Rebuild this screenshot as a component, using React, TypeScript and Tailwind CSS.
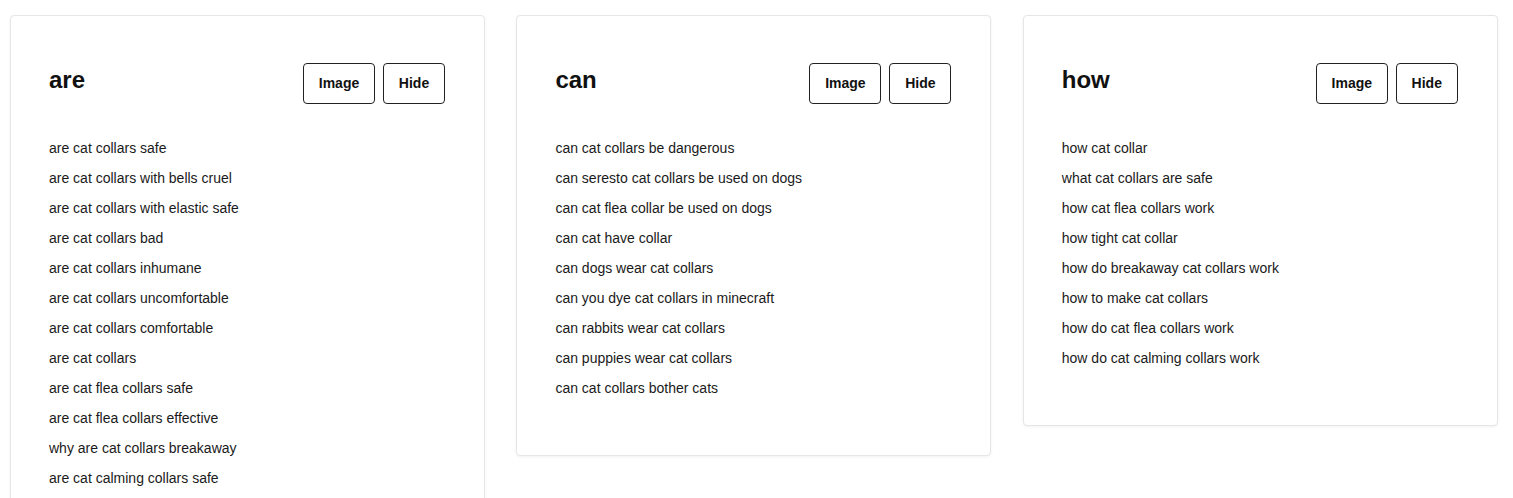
const groups: { title: string; items: string[] }[] = [
  {
    title: "are",
    items: [
      "are cat collars safe",
      "are cat collars with bells cruel",
      "are cat collars with elastic safe",
      "are cat collars bad",
      "are cat collars inhumane",
      "are cat collars uncomfortable",
      "are cat collars comfortable",
      "are cat collars",
      "are cat flea collars safe",
      "are cat flea collars effective",
      "why are cat collars breakaway",
      "are cat calming collars safe",
    ],
  },
  {
    title: "can",
    items: [
      "can cat collars be dangerous",
      "can seresto cat collars be used on dogs",
      "can cat flea collar be used on dogs",
      "can cat have collar",
      "can dogs wear cat collars",
      "can you dye cat collars in minecraft",
      "can rabbits wear cat collars",
      "can puppies wear cat collars",
      "can cat collars bother cats",
    ],
  },
  {
    title: "how",
    items: [
      "how cat collar",
      "what cat collars are safe",
      "how cat flea collars work",
      "how tight cat collar",
      "how do breakaway cat collars work",
      "how to make cat collars",
      "how do cat flea collars work",
      "how do cat calming collars work",
    ],
  },
]

function Card({ title, items }: { title: string; items: string[] }) {
  return (
    <div className="bg-white border border-[#e6e6e6] rounded-[4px] shadow-[0_1px_3px_rgba(0,0,0,0.06)] pt-[47px] pl-[38px] pr-[39px] pb-[52px]">
      <div className="flex items-center justify-between h-[41px]">
        <h2 className="text-[24px] font-bold text-[#111] leading-none -mt-[8px]">{title}</h2>
        <div className="flex gap-[8px]">
          <button className="h-[41px] w-[72px] border border-[#222] rounded-[4px] bg-white text-[14px] font-bold text-[#111]">Image</button>
          <button className="h-[41px] w-[62px] border border-[#222] rounded-[4px] bg-white text-[14px] font-bold text-[#111]">Hide</button>
        </div>
      </div>
      <ul className="mt-[29px]">
        {items.map(t => (
          <li key={t} className="text-[14px] leading-[30px] text-[#1a1a1a]">{t}</li>
        ))}
      </ul>
    </div>
  )
}

export default function App() {
  return (
    <div className="min-h-screen bg-white pt-[15px] pl-[10px]" style={{ fontFamily: '"Liberation Sans", Arial, sans-serif' }}>
      <div className="grid grid-cols-[475px_475px_475px] gap-[31.4px] items-start">
        {groups.map(g => <Card key={g.title} title={g.title} items={g.items} />)}
      </div>
    </div>
  )
}
